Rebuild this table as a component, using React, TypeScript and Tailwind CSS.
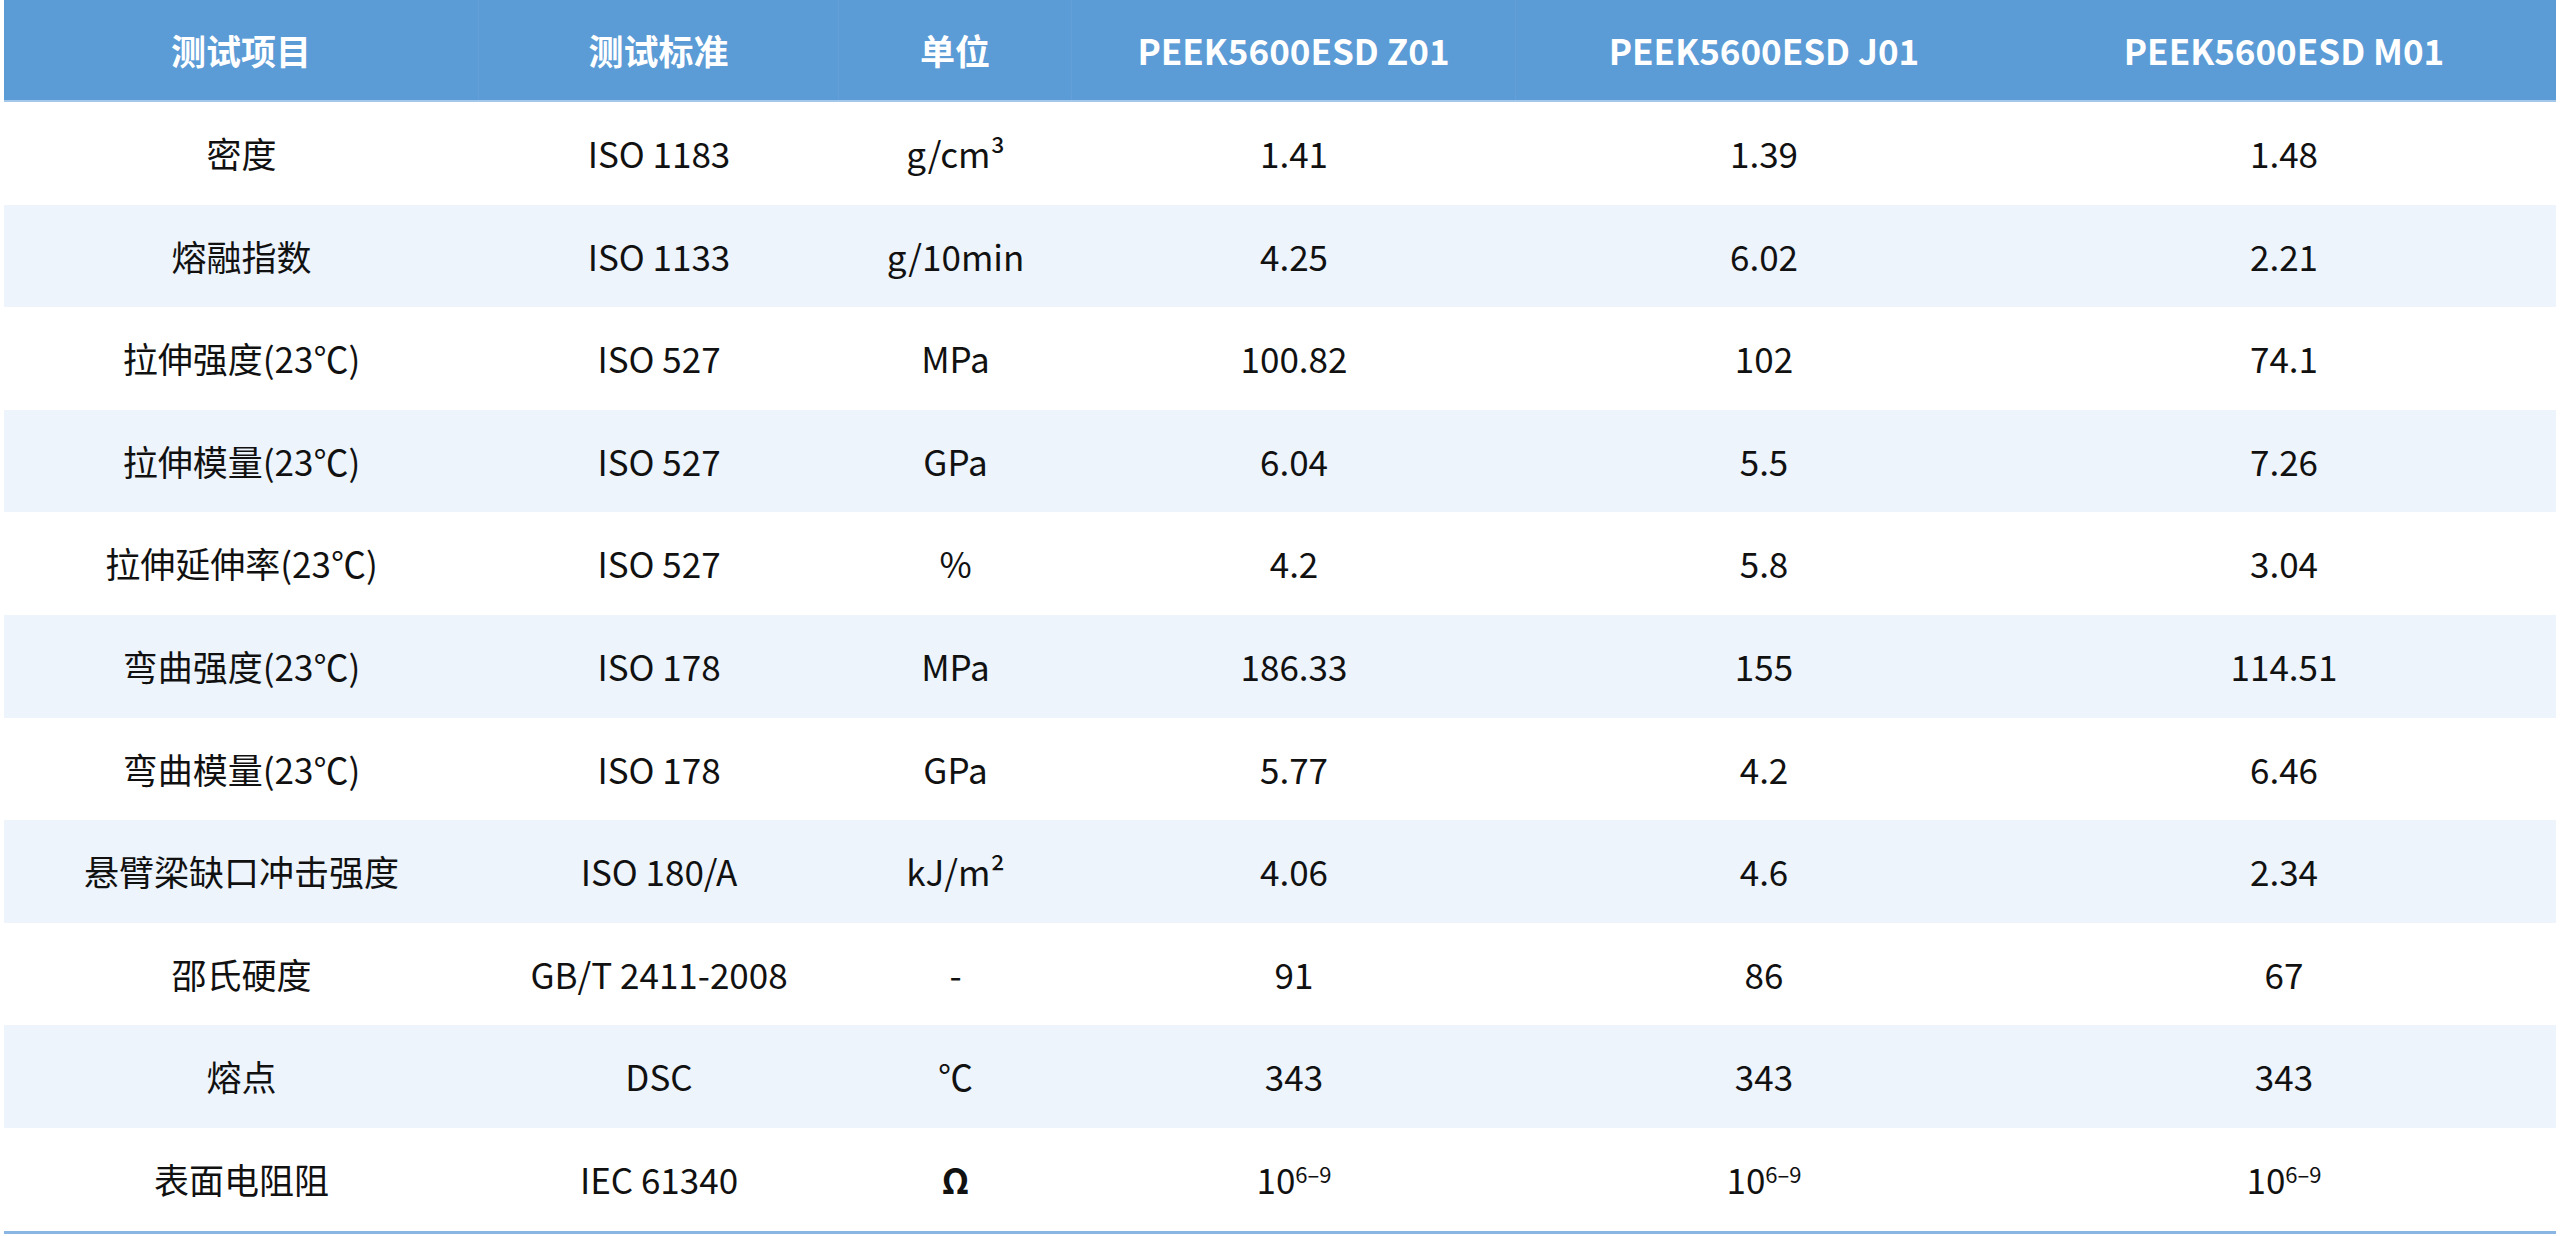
const head = ['测试项目', '测试标准', '单位', 'PEEK5600ESD Z01', 'PEEK5600ESD J01', 'PEEK5600ESD M01'];

const pow = <>10<sup className="text-[22px] relative -top-[6px]">6–9</sup></>;

const rows: React.ReactNode[][] = [
  ['密度', 'ISO 1183', 'g/cm³', '1.41', '1.39', '1.48'],
  ['熔融指数', 'ISO 1133', 'g/10min', '4.25', '6.02', '2.21'],
  ['拉伸强度(23℃)', 'ISO 527', 'MPa', '100.82', '102', '74.1'],
  ['拉伸模量(23℃)', 'ISO 527', 'GPa', '6.04', '5.5', '7.26'],
  ['拉伸延伸率(23℃)', 'ISO 527', '%', '4.2', '5.8', '3.04'],
  ['弯曲强度(23℃)', 'ISO 178', 'MPa', '186.33', '155', '114.51'],
  ['弯曲模量(23℃)', 'ISO 178', 'GPa', '5.77', '4.2', '6.46'],
  ['悬臂梁缺口冲击强度', 'ISO 180/A', 'kJ/m²', '4.06', '4.6', '2.34'],
  ['邵氏硬度', 'GB/T 2411-2008', '-', '91', '86', '67'],
  ['熔点', 'DSC', '℃', '343', '343', '343'],
  ['表面电阻阻', 'IEC 61340', <span className="font-bold">Ω</span>, pow, pow, pow],
];

const cols = 'grid grid-cols-[475px_360px_233px_444px_496px_544px]';

export default function App() {
  return (
    <div className="w-[2560px] h-[1236px] bg-white px-[4px] font-['Noto_Sans_CJK_SC','Noto_Sans',sans-serif] text-[35px] text-[#111]">
      <div className={`${cols} h-[102px] bg-[#5b9bd6] border-b-2 border-[#a4c7ec] text-white font-bold`}>
        {head.map((h, i) => (
          <div key={h} className={`flex items-center justify-center ${i < 4 ? 'border-r border-[#649fd8]' : ''}`}>{h}</div>
        ))}
      </div>
      {rows.map((r, ri) => (
        <div key={ri} className={`${cols} h-[102.6px] ${ri % 2 === 1 ? 'bg-[#edf4fc]' : 'bg-white'}`}>
          {r.map((c, ci) => (
            <div key={ci} className="flex items-center justify-center">{c}</div>
          ))}
        </div>
      ))}
      <div className="h-[3px] bg-[#8ab6e4]" />
    </div>
  );
}
